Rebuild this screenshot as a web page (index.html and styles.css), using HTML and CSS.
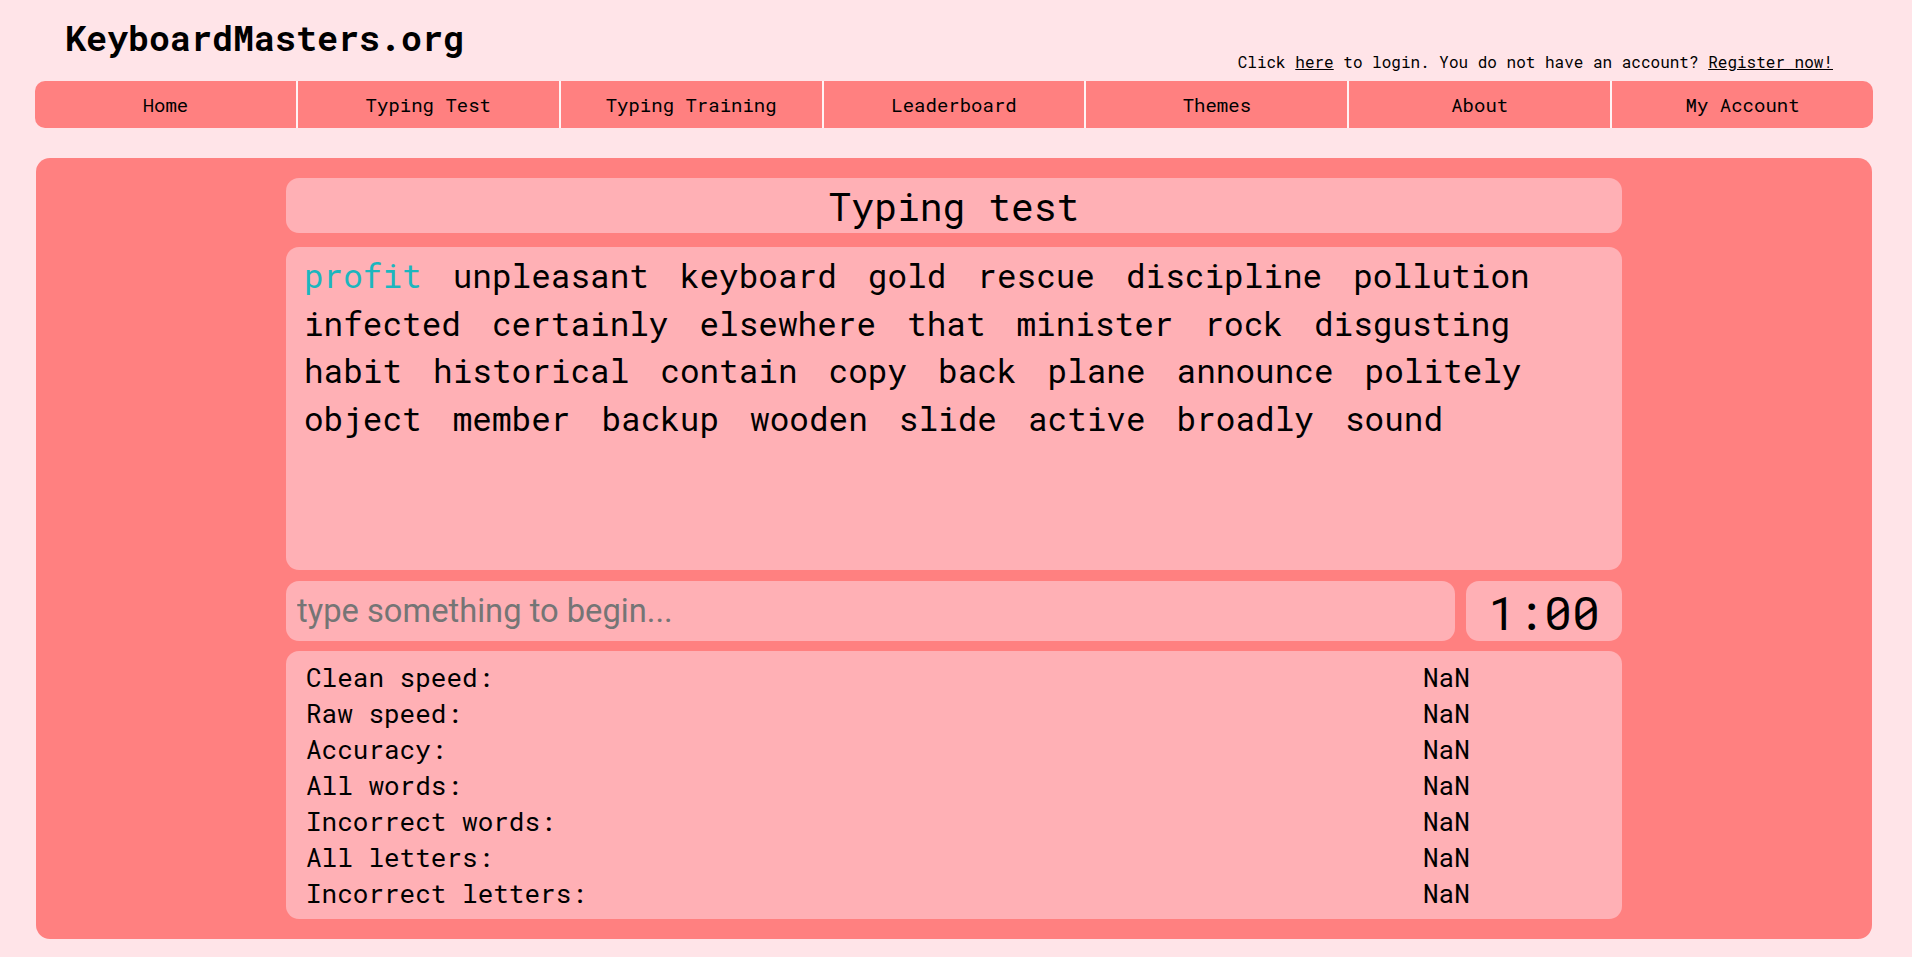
FILE: index.html
```html
<!DOCTYPE html>
<html lang="en">
<head>
<meta charset="utf-8">
<title>KeyboardMasters.org</title>
<link rel="stylesheet" href="styles.css">
</head>
<body>
<div class="page">
  <header class="header">
    <div class="logo">KeyboardMasters.org</div>
    <div class="login">Click <a href="#">here</a> to login. You do not have an account? <a href="#">Register now!</a></div>
  </header>
  <nav class="nav">
    <a class="nav-item" href="#">Home</a>
    <a class="nav-item" href="#">Typing Test</a>
    <a class="nav-item" href="#">Typing Training</a>
    <a class="nav-item" href="#">Leaderboard</a>
    <a class="nav-item" href="#">Themes</a>
    <a class="nav-item" href="#">About</a>
    <a class="nav-item" href="#">My Account</a>
  </nav>
  <main class="panel">
    <div class="column">
      <div class="box title-box">Typing test</div>
      <div class="box words-box">
        <span class="word current">profit</span>
        <span class="word">unpleasant</span>
        <span class="word">keyboard</span>
        <span class="word">gold</span>
        <span class="word">rescue</span>
        <span class="word">discipline</span>
        <span class="word">pollution</span>
        <span class="word">infected</span>
        <span class="word">certainly</span>
        <span class="word">elsewhere</span>
        <span class="word">that</span>
        <span class="word">minister</span>
        <span class="word">rock</span>
        <span class="word">disgusting</span>
        <span class="word">habit</span>
        <span class="word">historical</span>
        <span class="word">contain</span>
        <span class="word">copy</span>
        <span class="word">back</span>
        <span class="word">plane</span>
        <span class="word">announce</span>
        <span class="word">politely</span>
        <span class="word">object</span>
        <span class="word">member</span>
        <span class="word">backup</span>
        <span class="word">wooden</span>
        <span class="word">slide</span>
        <span class="word">active</span>
        <span class="word">broadly</span>
        <span class="word">sound</span>
      </div>
      <div class="input-row">
        <input class="box type-input" type="text" placeholder="type something to begin...">
        <div class="box timer">1:00</div>
      </div>
      <div class="box stats">
        <div class="stat-label">Clean speed:</div><div class="stat-value">NaN</div>
        <div class="stat-label">Raw speed:</div><div class="stat-value">NaN</div>
        <div class="stat-label">Accuracy:</div><div class="stat-value">NaN</div>
        <div class="stat-label">All words:</div><div class="stat-value">NaN</div>
        <div class="stat-label">Incorrect words:</div><div class="stat-value">NaN</div>
        <div class="stat-label">All letters:</div><div class="stat-value">NaN</div>
        <div class="stat-label">Incorrect letters:</div><div class="stat-value">NaN</div>
      </div>
    </div>
  </main>
</div>
</body>
</html>
```
FILE: styles.css
```css
html, body {
  margin: 0;
  padding: 0;
}
body {
  background: #ffe4e8;
  color: #000;
  font-family: "Roboto Mono", "Liberation Mono", "DejaVu Sans Mono", monospace;
}
.page {
  padding: 0 39px 18px 35px;
}
.header {
  display: flex;
  justify-content: space-between;
  height: 81px;
}
.logo {
  margin: 14px 0 0 30px;
  font-size: 35px;
  font-weight: 700;
  line-height: 46px;
}
.login {
  align-self: flex-end;
  margin: 0 40px 9px 0;
  font-size: 16px;
  line-height: 20px;
}
.login a {
  color: #000;
  text-decoration: underline;
}
.nav {
  display: flex;
  height: 47px;
  background: #ff8080;
  border-radius: 10px;
  overflow: hidden;
}
.nav-item {
  flex: 1 1 0;
  box-sizing: border-box;
  border-left: 2px solid #fff3f4;
  text-align: center;
  line-height: 47px;
  font-size: 19px;
  color: #000;
  text-decoration: none;
}
.nav-item:first-child {
  border-left: none;
}
.panel {
  display: block;
  margin: 30px 1px 0 1px;
  padding: 20px 0;
  background: #ff8080;
  border-radius: 14px;
}
.column {
  width: 1336px;
  margin: 0 auto;
  display: flex;
  flex-direction: column;
}
.box {
  background: #ffb0b5;
  border-radius: 13px;
  box-sizing: border-box;
}
.title-box {
  height: 55px;
  padding-top: 2px;
  text-align: center;
  font-size: 38px;
  line-height: 53px;
}
.words-box {
  margin-top: 14px;
  height: 323px;
  padding: 5px 18px;
  display: flex;
  flex-wrap: wrap;
  align-content: flex-start;
  column-gap: 31px;
  font-size: 32.7px;
  line-height: 47.6px;
}
.word.current {
  color: #1cb6be;
}
.input-row {
  margin-top: 11px;
  height: 60px;
  display: flex;
  gap: 11px;
}
.type-input {
  flex: 1;
  height: 60px;
  border: none;
  outline: none;
  padding: 0 11px;
  font-family: Roboto, "Noto Sans", sans-serif;
  font-size: 32.7px;
  color: #000;
}
.type-input::placeholder {
  color: #757575;
}
.timer {
  width: 156px;
  height: 60px;
  padding-top: 2px;
  text-align: center;
  font-size: 46.5px;
  line-height: 58px;
}
.stats {
  margin-top: 10px;
  height: 268px;
  padding: 8px 20px;
  display: grid;
  grid-template-columns: 1117px 1fr;
  grid-auto-rows: 36px;
  font-size: 26px;
  line-height: 36px;
}
```
